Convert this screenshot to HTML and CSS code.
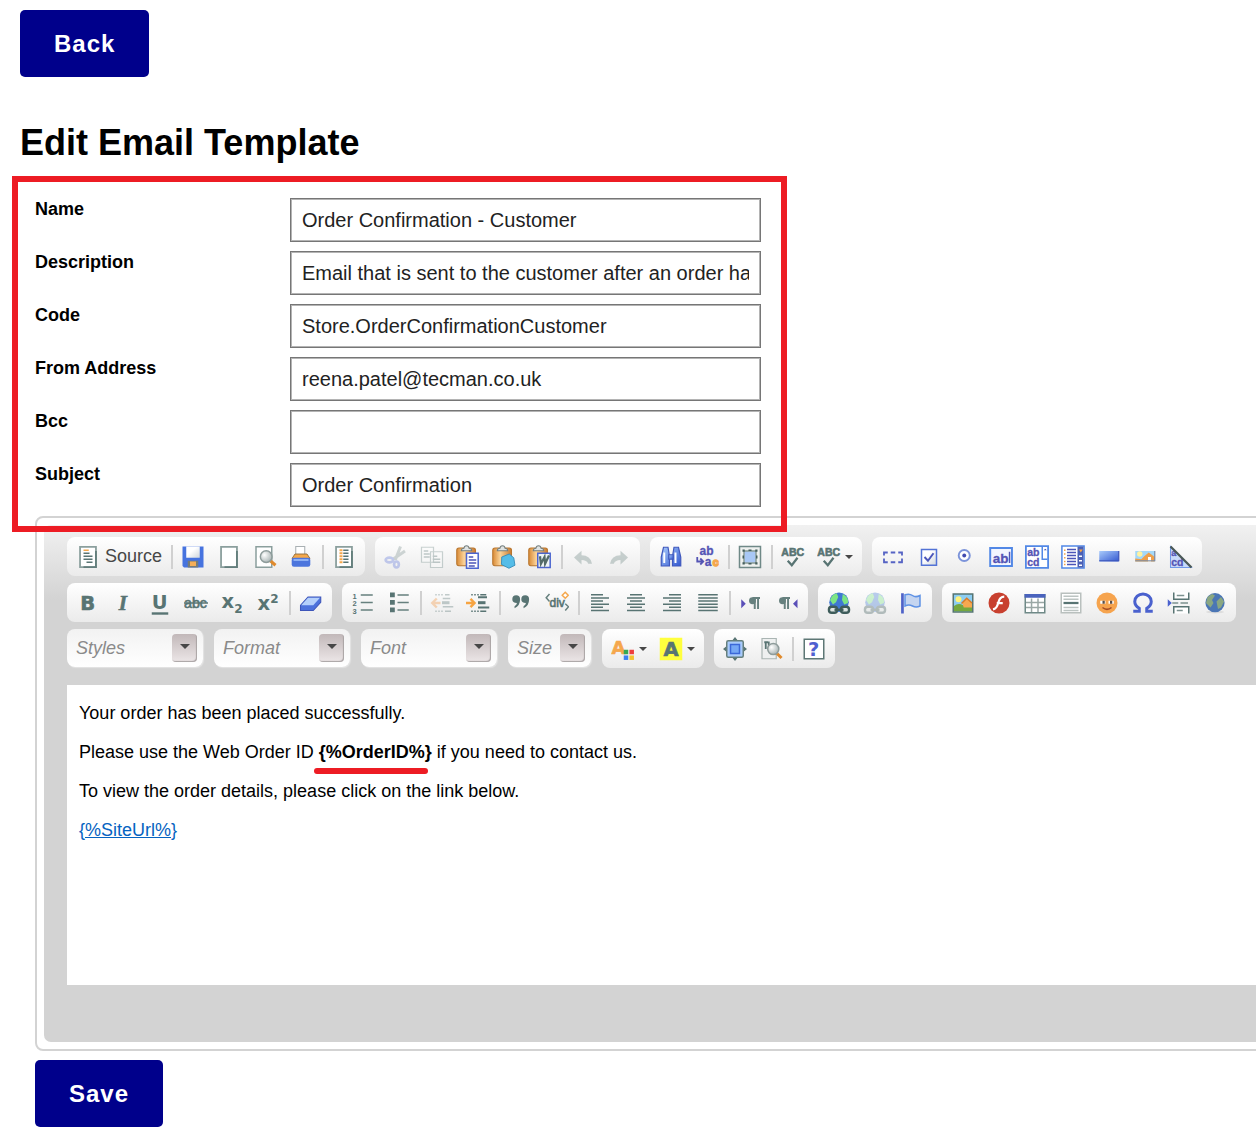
FILE: index.html
```html
<!DOCTYPE html>
<html lang="en">
<head>
<meta charset="utf-8">
<meta name="viewport" content="width=device-width, initial-scale=1">
<title>Edit Email Template</title>
<link rel="stylesheet" href="styles.css">
</head>
<body>
<svg class="defs" aria-hidden="true">
  <defs>
    <linearGradient id="blue" x1="0" y1="0" x2="1" y2="1"><stop offset="0" stop-color="#a9cbfb"/><stop offset="1" stop-color="#3358d0"/></linearGradient>
    <linearGradient id="board" x1="0" y1="0" x2="1" y2="0"><stop offset="0" stop-color="#d98a35"/><stop offset=".4" stop-color="#fbd49a"/><stop offset="1" stop-color="#c9792d"/></linearGradient>
    <linearGradient id="sheet" x1="0" y1="0" x2="1" y2="1"><stop offset=".4" stop-color="#fff"/><stop offset="1" stop-color="#cfd6dc"/></linearGradient>
    <radialGradient id="lens" cx=".35" cy=".35" r=".7"><stop offset="0" stop-color="#fff"/><stop offset="1" stop-color="#a9b4b4"/></radialGradient>
    <symbol id="page" viewBox="0 0 16 16"><path d="M2.700 1.200h10.600v13.600H2.700z" fill="#fff" stroke="#8b9f9d" stroke-width="1.200"/><path d="M13.300 4v10.800H5" fill="none" stroke="#637e7c" stroke-width="1.200"/></symbol>
    <symbol id="clipboard" viewBox="0 0 16 16"><rect x=".5" y="2" width="12.500" height="11.800" rx="1.500" fill="url(#board)" stroke="#b8762f" stroke-width=".7"/><path d="M3.500 3.800c0-1 1-1.500 1.800-1.600C5.500 0 8.500 0 8.700 2.200c.9.1 1.800.6 1.800 1.600z" fill="#dfe3e3" stroke="#747f7f" stroke-width=".7"/></symbol>
    <symbol id="abc-check" viewBox="0 0 16 16"><text x=".2" y="7.400" class="glyph edged" font-size="7">ABC</text><path d="M4.500 10.500l2.700 3L11 8.500" fill="none" stroke="#587473" stroke-width="1.500"/></symbol>
    <symbol id="down" viewBox="0 0 8 4"><path d="M0 0h8L4 4z" fill="#474747"/></symbol>
    <symbol id="scene" viewBox="0 0 16 16"><path d="M1.500 2h13v12h-13z" fill="#8ccdf2" stroke="#567472"/><circle cx="5" cy="5.500" r="2" fill="#fff27b"/><path d="M2 10q3-2.500 6-.5l6 1v3H2z" fill="#75a83e"/><path d="M7.500 8l3-3 3.500 3v3H8.500z" fill="#f6a850"/><path d="M7 8.300l3.500-3.500L14 8" fill="none" stroke="#d87a27"/></symbol>
  </defs>
</svg>
<main class="page">
  <button type="button" class="button">Back</button>
  <h1>Edit Email Template</h1>
  <form class="template-form">
    <div class="fields">
      <label for="name">Name</label><input id="name" type="text" value="Order Confirmation - Customer">
      <label for="description">Description</label><input id="description" type="text" value="Email that is sent to the customer after an order has been placed">
      <label for="code">Code</label><input id="code" type="text" value="Store.OrderConfirmationCustomer">
      <label for="from">From Address</label><input id="from" type="text" value="reena.patel@tecman.co.uk">
      <label for="bcc">Bcc</label><input id="bcc" type="text">
      <label for="subject">Subject</label><input id="subject" type="text" value="Order Confirmation">
    </div>
    <div class="editor">
      <div class="editor-frame">
        <div class="toolbars">
          <div class="toolbar-row">
            <div class="group">
              <button type="button" class="tool source"><svg viewBox="0 0 16 16"><use href="#page"/><path d="M5 3.500h3.500" stroke="#f5a74c"/><path d="M5 5.500h4M5 7.500h6M5 9.500h6M7 11.500h4" stroke="#587473"/></svg>Source</button>
              <span class="sep"></span>
              <button type="button" class="tool" aria-label="Save"><svg viewBox="0 0 16 16"><path d="M1 1h14v14H2l-1-1z" fill="#4673df"/><path d="M3.500 1h9v7.500h-9z" fill="url(#sheet)"/><path d="M4.500 10.500h7V15h-7z" fill="#767c78"/><path d="M6 11h4v3H6z" fill="#f5ae58"/></svg></button>
              <button type="button" class="tool" aria-label="New Page"><svg viewBox="0 0 16 16"><use href="#page"/></svg></button>
              <button type="button" class="tool" aria-label="Preview"><svg viewBox="0 0 16 16"><path d="M2 1.200h10.500v13.600H2z" fill="#fff" stroke="#8b9f9d"/><path d="M11.500 10.500l3.500 3" stroke="#e08a2c" stroke-width="2"/><circle cx="8.800" cy="7.800" r="3.900" fill="url(#lens)" stroke="#8e9c9b"/></svg></button>
              <button type="button" class="tool" aria-label="Print"><svg viewBox="0 0 16 16"><path d="M4.500 1h6v6h-6z" fill="#fff" stroke="#a9b0b3" stroke-width=".7"/><path d="M2 9l2-3h8l2 3z" fill="#f4a84b" stroke="#8e6a38" stroke-width=".6"/><rect x="1.800" y="8.500" width="12.400" height="6" rx="1.500" fill="#4c75dd"/><path d="M3 10h10" stroke="#a3c5fb"/></svg></button>
              <span class="sep"></span>
              <button type="button" class="tool" aria-label="Templates"><svg viewBox="0 0 16 16"><use href="#page"/><path d="M5 3.500h2M5 5.500h2M5 7.500h2M5 9.500h2M5 11.500h2" stroke="#f5a74c" stroke-width="1.400"/><path d="M7.500 3.500H11M7.500 5.500H11M7.500 7.500H11M7.500 9.500H11M7.500 11.500H11" stroke="#587473"/></svg></button>
            </div>
            <div class="group">
              <button type="button" class="tool dim" aria-label="Cut"><svg viewBox="0 0 16 16"><path d="M11 1L7.500 10M14 4L6 9.500" stroke="#7f9291" stroke-width="2"/><g fill="none" stroke="#6077db" stroke-width="1.800"><ellipse cx="3.600" cy="10" rx="2.500" ry="1.600"/><ellipse cx="8.300" cy="13" rx="1.600" ry="2"/></g></svg></button>
              <button type="button" class="tool dim" aria-label="Copy"><svg viewBox="0 0 16 16"><g fill="#fff" stroke="#6f8987" stroke-width=".8"><path d="M1 1.500h8v10H1zM7 4.500h8v10.500H7z"/></g><path d="M2.500 4h3M2.500 6h4M2.500 8h4M8.500 7.500h3M8.500 9.500h5M8.500 11.500h5" stroke="#587473" stroke-width=".9"/></svg></button>
              <button type="button" class="tool" aria-label="Paste"><svg viewBox="0 0 16 16"><use href="#clipboard"/><path d="M7 5.500h7.800v10H7z" fill="#fff" stroke="#4b65cf"/><path d="M8.500 8h3M8.500 10h5M8.500 12h5M8.500 14h4" stroke="#4b55b8"/></svg></button>
              <button type="button" class="tool" aria-label="Paste as plain text"><svg viewBox="0 0 16 16"><use href="#clipboard"/><path d="M6.500 8l5-2 3 2.500.8 5-4 2-5-2.500z" fill="#55bde8" stroke="#368cb8" stroke-width=".6"/></svg></button>
              <button type="button" class="tool" aria-label="Paste from Word"><svg viewBox="0 0 16 16"><use href="#clipboard"/><path d="M6.500 5.500h8.300v9.500H6.500z" fill="#eef4f5" stroke="#4b65cf"/><path d="M8 7.500l.6 5L11 8l.4 4.500L14 7" fill="none" stroke="#536b69" stroke-width="1.500"/></svg></button>
              <span class="sep"></span>
              <button type="button" class="tool dim" aria-label="Undo"><svg viewBox="0 0 16 16"><path d="M2 8.300l5-4.500v3q6 0 7 5.700h-2.500q-1-2.500-4.500-2.500v3z" fill="#6e8784"/></svg></button>
              <button type="button" class="tool dim" aria-label="Redo"><svg viewBox="0 0 16 16"><path d="M14 8.300L9 3.800v3q-6 0-7 5.700h2.500Q5.500 10 9 10v3z" fill="#6e8784"/></svg></button>
            </div>
            <div class="group">
              <button type="button" class="tool" aria-label="Find"><svg viewBox="0 0 16 16"><g fill="url(#blue)" stroke="#4058bd" stroke-width=".8"><path d="M3 1.500h3l1 6v6.500H1.500V8zM10 1.500h3L14.500 8v6H9V7.500z"/><path d="M6.500 6.500h3v3h-3z"/></g><path d="M3.500 5v7M11 5v7" stroke="#fff" stroke-width="1.300"/></svg></button>
              <button type="button" class="tool" aria-label="Replace"><svg viewBox="0 0 16 16"><text x="3" y="6.800" class="glyph violet edged" font-size="8">ab</text><text x="6.500" y="14.200" class="glyph violet edged" font-size="8">a</text><text x="11.800" y="14.200" class="glyph orange" font-size="7">c</text><path d="M1.500 8v3H5M3.500 9l2 2-2 2" fill="none" stroke="#5454b4" stroke-width="1.200"/></svg></button>
              <span class="sep"></span>
              <button type="button" class="tool" aria-label="Select All"><svg viewBox="0 0 16 16"><path d="M1 1h14v14H1z" fill="#eef1ef" stroke="#6f8987"/><path d="M4 4h8v8H4z" fill="#a9c8f6" stroke="#8a9c98"/><path d="M3 3h1.500v1.500H3zM11.500 3H13v1.500h-1.500zM3 11.500h1.500V13H3zM11.500 11.500H13V13h-1.500zM7 3h2v1H7zM7 12h2v1H7zM3 7h1v2H3zM12 7h1v2h-1z" fill="#455f5d"/></svg></button>
              <span class="sep"></span>
              <button type="button" class="tool" aria-label="Check Spelling"><svg viewBox="0 0 16 16"><use href="#abc-check"/></svg></button>
              <button type="button" class="tool menu" aria-label="Spell Check As You Type"><svg viewBox="0 0 16 16"><use href="#abc-check"/></svg><svg class="down"><use href="#down"/></svg></button>
            </div>
            <div class="group">
              <button type="button" class="tool" aria-label="Form"><svg viewBox="0 0 16 16"><path d="M2 7V5h2.500M6.500 5h3M11.500 5H14v2M14 9v2.500h-2.500M9.500 11.500h-3M4.500 11.500H2V9" fill="none" stroke="#5563c4" stroke-width="1.200"/></svg></button>
              <button type="button" class="tool" aria-label="Checkbox"><svg viewBox="0 0 16 16"><path d="M3 3h10v10.500H3z" fill="url(#sheet)" stroke="#5373d6"/><path d="M5 8l2.300 2.500L11 5.500" fill="none" stroke="#4c56ba" stroke-width="1.300"/></svg></button>
              <button type="button" class="tool" aria-label="Radio Button"><svg viewBox="0 0 16 16"><circle cx="7.500" cy="7" r="3.700" fill="#fff" stroke="#7c94da" stroke-width="1.300"/><circle cx="7.500" cy="7" r="1.300" fill="#414bb0"/></svg></button>
              <button type="button" class="tool" aria-label="Text Field"><svg viewBox="0 0 16 16"><path d="M.8 2h14.500v12H.8z" fill="#f3f6ff" stroke="#5288e6" stroke-width="1.300"/><text x="2.500" y="11.800" class="glyph violet" font-size="9">ab</text><path d="M13.700 4.500v7.500" stroke="#5454b4"/></svg></button>
              <button type="button" class="tool" aria-label="Textarea"><svg viewBox="0 0 16 16"><path d="M.6.700h14.800v14.600H.6z" fill="#fff" stroke="#5288e6" stroke-width="1.200"/><path d="M11.500 1v8.500H15" fill="none" stroke="#5288e6"/><path d="M12.500 3.500h2l-1-1z" fill="#404bb0"/><text x="1.500" y="7" class="glyph violet edged" font-size="7">ab</text><text x="1.500" y="14" class="glyph violet edged" font-size="7">cd</text></svg></button>
              <button type="button" class="tool" aria-label="Selection Field"><svg viewBox="0 0 16 16"><path d="M.6.700h14.800v14.600H.6z" fill="#fff" stroke="#5288e6"/><path d="M2 3.500h1M2 6h1M2 8.500h1M2 11h1M2 13h1" stroke="#f2a34a"/><path d="M4 3h6M4 5h6M4 7h6M4 9h6M4 11h6M4 13h6" stroke="#4b55b8"/><path d="M11 1h4v14h-4z" fill="#4b60b5"/><path d="M12 3h2.500L13.200 5z" fill="#f8a846"/><path d="M12 7h2v1h-2zM12 10h2v1h-2zM12 13h2v1h-2z" fill="#fff"/></svg></button>
              <button type="button" class="tool" aria-label="Button"><svg viewBox="0 0 16 16"><path d="M1.500 4h13v7h-13z" fill="url(#blue)"/><path d="M1.500 10.500h13V4" fill="none" stroke="#3d55b9" stroke-width=".8"/></svg></button>
              <button type="button" class="tool" aria-label="Image Button"><svg viewBox="0 0 16 16"><path d="M1.500 4h13v7h-13z" fill="#a4d8f8"/><circle cx="4.500" cy="6" r="1.800" fill="#fff3a0"/><path d="M1.500 9l4 .5 2-2 3-2.500 4 3v3h-13z" fill="#efa04a"/><path d="M10 8h2v3h-2z" fill="#fff"/><path d="M1.500 10.500h13V4" fill="none" stroke="#7a8ca7" stroke-width=".8"/></svg></button>
              <button type="button" class="tool" aria-label="Hidden Field"><svg viewBox="0 0 16 16"><path d="M1 1v14h14z" fill="#c9dafa" stroke="#7098e8" stroke-width=".7"/><text x="1.500" y="7.500" class="glyph violet edged" font-size="6">a</text><text x="1.500" y="14" class="glyph violet edged" font-size="7">cd</text><path d="M1 1l14 14" stroke="#4b5957" stroke-width="1.500"/></svg></button>
            </div>
          </div>
          <div class="toolbar-row">
            <div class="group">
              <button type="button" class="tool" aria-label="Bold"><svg viewBox="0 0 16 16"><text x="2.800" y="12.700" class="glyph heavy edged" font-size="13">B</text></svg></button>
              <button type="button" class="tool" aria-label="Italic"><svg viewBox="0 0 16 16"><text x="4.500" y="12.500" class="glyph serif edged" font-size="14">I</text></svg></button>
              <button type="button" class="tool" aria-label="Underline"><svg viewBox="0 0 16 16"><text x="2.500" y="12.200" class="glyph heavy" font-size="13">U</text><path d="M2.500 15h11" stroke="#587473" stroke-width="1.600"/></svg></button>
              <button type="button" class="tool" aria-label="Strike Through"><svg viewBox="0 0 16 16"><text x="0" y="11" class="glyph plain edged" font-size="9.500">abc</text><path d="M0 8h16" stroke="#587473"/></svg></button>
              <button type="button" class="tool" aria-label="Subscript"><svg viewBox="0 0 16 16"><text x="1" y="11.500" class="glyph heavy" font-size="13">x</text><text x="9.500" y="14.500" class="glyph heavy" font-size="8">2</text></svg></button>
              <button type="button" class="tool" aria-label="Superscript"><svg viewBox="0 0 16 16"><text x="1" y="12.500" class="glyph heavy" font-size="13">x</text><text x="9.500" y="7.800" class="glyph heavy" font-size="8">2</text></svg></button>
              <span class="sep"></span>
              <button type="button" class="tool" aria-label="Remove Format"><svg viewBox="0 0 16 16"><path d="M1 9.500L6 4h8.500v3.500L9.500 13H1z" fill="#4d72dc" stroke="#3d55b9" stroke-width=".7"/><path d="M1.500 9.500L6 4.500h8l-4.500 5z" fill="#b5d0fb"/></svg></button>
            </div>
            <div class="group">
              <button type="button" class="tool" aria-label="Numbered List"><svg viewBox="0 0 16 16"><text x="1" y="5" class="glyph" font-size="5">1</text><text x="1" y="10" class="glyph" font-size="5">2</text><text x="1" y="15" class="glyph" font-size="5">3</text><path d="M6.500 2.700h8M6.500 7.700h8M6.500 12.700h8" stroke="#66807e"/></svg></button>
              <button type="button" class="tool" aria-label="Bulleted List"><svg viewBox="0 0 16 16"><path d="M2 1h3.200v3.200H2zM2 6h3.200v3.200H2zM2 11h3.200v3.200H2z" fill="#587473"/><path d="M7 2.700h7.500M7 7.700h7.500M7 12.700h7.500" stroke="#66807e"/></svg></button>
              <span class="sep"></span>
              <button type="button" class="tool dim" aria-label="Decrease Indent"><svg viewBox="0 0 16 16"><path d="M3.500 2.500h5M3.500 13.500h5" stroke="#587473" stroke-dasharray="1 1"/><path d="M8.500 5h5M8.500 10.500h7M10 2.500h3M10 13.500h4" stroke="#587473"/><path d="M8 6.800h5v2H8z" fill="#587473"/><path d="M7 8H2M4.500 5L1.500 8l3 3" fill="none" stroke="#f2913a" stroke-width="1.600"/></svg></button>
              <button type="button" class="tool" aria-label="Increase Indent"><svg viewBox="0 0 16 16"><path d="M3.500 2.500h5M3.500 13.500h5" stroke="#587473" stroke-dasharray="1 1"/><path d="M9.500 2.500h4M9.500 13.500h4" stroke="#587473"/><path d="M8 4.200h6M8 11h7.500" stroke="#587473" stroke-width="1.400"/><path d="M8 6.800h5v2H8z" fill="#587473"/><path d="M0 8h5M3 5.300L5.700 8 3 10.700" fill="none" stroke="#f6a442" stroke-width="1.600"/></svg></button>
              <span class="sep"></span>
              <button type="button" class="tool" aria-label="Block Quote"><svg viewBox="0 0 16 16"><path id="q" d="M2.200 5.500a2.600 2.600 0 1 1 5.200 0q0 4.500-3.700 6v-1.300q1.500-.8 1.600-2.200-3.100 0-3.100-2.500z" fill="#587473"/><use href="#q" x="6"/></svg></button>
              <button type="button" class="tool" aria-label="Create Div Container"><svg viewBox="0 0 16 16"><path d="M3 2L.8 4.500 3 7M13.500 8.500l2.200 2-2.200 2.500" fill="none" stroke="#66807e"/><text x="3" y="10.500" class="glyph plain edged" font-size="8">div</text><path d="M13.500.8l2 2-2 2-2-2z" fill="#fff" stroke="#f5a74c"/></svg></button>
              <span class="sep"></span>
              <button type="button" class="tool" aria-label="Align Left"><svg viewBox="0 0 16 16"><path d="M2 2.500h8M2 4.600h12M2 6.700h8M2 8.800h12M2 10.900h8M2 13h12" stroke="#587473"/></svg></button>
              <button type="button" class="tool" aria-label="Center"><svg viewBox="0 0 16 16"><path d="M4 2.500h8M2 4.600h12M4 6.700h8M2 8.800h12M4 10.900h8M2 13h12" stroke="#587473"/></svg></button>
              <button type="button" class="tool" aria-label="Align Right"><svg viewBox="0 0 16 16"><path d="M6 2.500h8M2 4.600h12M6 6.700h8M2 8.800h12M6 10.900h8M2 13h12" stroke="#587473"/></svg></button>
              <button type="button" class="tool" aria-label="Justify"><svg viewBox="0 0 16 16"><path d="M1.500 2.500h13M1.500 4.600h13M1.500 6.700h13M1.500 8.800h13M1.500 10.900h13M1.500 13h13" stroke="#587473"/></svg></button>
              <span class="sep"></span>
              <button type="button" class="tool" aria-label="Text direction from left to right"><svg viewBox="0 0 16 16"><path d="M1.500 5.500l3 3-3 3z" fill="#5a4fb8"/><path d="M14 4.700H9M10.500 4.500V12M12.700 4.500V12" stroke="#66807e" stroke-width="1.300"/><circle cx="9" cy="6.500" r="2.300" fill="#66807e"/></svg></button>
              <button type="button" class="tool" aria-label="Text direction from right to left"><svg viewBox="0 0 16 16"><path d="M15 5.500l-3 3 3 3z" fill="#5a4fb8"/><path d="M10 4.700H5M6.500 4.500V12M8.700 4.500V12" stroke="#66807e" stroke-width="1.300"/><circle cx="5" cy="6.500" r="2.300" fill="#66807e"/></svg></button>
            </div>
            <div class="group">
              <button type="button" class="tool" aria-label="Link"><svg viewBox="0 0 16 16"><g id="chain"><circle cx="8" cy="7.500" r="6.500" fill="#3f78d2"/><path d="M2 6q1.500-4 4.500-4.500L7.500 4 6 7.500 4 9zM10.500 2q4 2 3.500 6l-2.500 1L10 6z" fill="#7ce584"/><g fill="#dce4e2" stroke="#3e5c5a" stroke-width="1.600"><rect x="1.300" y="10.500" width="5.400" height="4" rx="1.800"/><rect x="9.300" y="10.500" width="5.400" height="4" rx="1.800"/></g><path d="M5 12.500h6" stroke="#3e5c5a" stroke-width="1.600"/></g></svg></button>
              <button type="button" class="tool dim" aria-label="Unlink"><svg viewBox="0 0 16 16"><use href="#chain"/></svg></button>
              <button type="button" class="tool" aria-label="Anchor"><svg viewBox="0 0 16 16"><path d="M4 2.500q3-1 5 .5t5 0v7q-2.500 1.300-5 0t-5 0z" fill="#c5d5f0" stroke="#5f92e5"/><path d="M2.300 1.500v13.500" stroke="#4e62c8" stroke-width="1.800"/></svg></button>
            </div>
            <div class="group">
              <button type="button" class="tool" aria-label="Image"><svg viewBox="0 0 16 16"><use href="#scene"/></svg></button>
              <button type="button" class="tool" aria-label="Flash"><svg viewBox="0 0 16 16"><circle cx="8" cy="8" r="7" fill="#c8402f"/><path d="M11.500 3.800q-3 0-4 4t-3.500 4.500M6.500 8h4" fill="none" stroke="#fff" stroke-width="1.500"/></svg></button>
              <button type="button" class="tool" aria-label="Table"><svg viewBox="0 0 16 16"><path d="M1.500 2.500h13v12h-13z" fill="#fff" stroke="#6f8987"/><path d="M1 2h14v2.500H1z" fill="#4a63bd"/><path d="M2 7.700h12M2 11h12M5.700 5v9M10 5v9" stroke="#9aa7a5"/></svg></button>
              <button type="button" class="tool" aria-label="Horizontal Line"><svg viewBox="0 0 16 16"><path d="M1.500 1.500h13v13h-13z" fill="#fff" stroke="#b9c0be"/><path d="M3 3.500h10M3 5.500h10M3 11h10M3 13h10" stroke="#bcc4c2"/><path d="M3 8h10" stroke="#587473" stroke-width="1.500"/></svg></button>
              <button type="button" class="tool" aria-label="Smiley"><svg viewBox="0 0 16 16"><circle cx="8" cy="8" r="7" fill="#f6a44e"/><path d="M3.500 6.500h3.500v2H3.500zM9 6.500h3.500v2H9z" fill="#fff"/><path d="M5 6.500h1.500v2H5zM10 6.500h1.500v2H10z" fill="#594e48"/><path d="M5 11q3 2.500 6 0" fill="none" stroke="#a44c25"/></svg></button>
              <button type="button" class="tool" aria-label="Insert Special Character"><svg viewBox="0 0 16 16"><path d="M1.500 13.500h4V11.500Q2.500 9.800 2.500 7a5.500 5 0 0 1 11 0q0 2.800-3 4.500v2h4" fill="none" stroke="#4a61ce" stroke-width="2"/></svg></button>
              <button type="button" class="tool" aria-label="Insert Page Break for Printing"><svg viewBox="0 0 16 16"><path d="M.5 5.500L3.200 8 .5 10.500z" fill="#4a61ce"/><path d="M4.500 1v4.500h10V1M4.500 15v-4.500h10V15" fill="#fff" stroke="#587473"/><path d="M6.500 3h5M6.500 13h4M3.500 8h4M9 8h5" stroke="#7c918f"/></svg></button>
              <button type="button" class="tool" aria-label="IFrame"><svg viewBox="0 0 16 16"><ellipse cx="8" cy="14" rx="6" ry="1" fill="#ddd"/><circle cx="8" cy="7.800" r="6.400" fill="#4b76b5"/><path d="M3 4l3-2 2 1-2 3 1 2-2 3-3-3zM9 7l3-3 2 3-2 4-2 1z" fill="#8aa782"/></svg></button>
            </div>
          </div>
          <div class="toolbar-row combos">
            <label class="combo"><select aria-label="Styles"><option>Styles</option></select><span class="arrow"><svg class="down"><use href="#down"/></svg></span></label>
            <label class="combo"><select aria-label="Format"><option>Format</option></select><span class="arrow"><svg class="down"><use href="#down"/></svg></span></label>
            <label class="combo"><select aria-label="Font"><option>Font</option></select><span class="arrow"><svg class="down"><use href="#down"/></svg></span></label>
            <label class="combo small"><select aria-label="Size"><option>Size</option></select><span class="arrow"><svg class="down"><use href="#down"/></svg></span></label>
            <div class="toolbar-row">
              <div class="group">
                <button type="button" class="tool menu" aria-label="Text Color"><svg viewBox="0 0 16 16"><text x=".3" y="11.500" class="glyph heavy orange edged" font-size="12">A</text><path d="M8.500 8.500h3v3h-3z" fill="#36a852"/><path d="M12.300 8.500h3v3h-3z" fill="#ee3d3d"/><path d="M8.500 12.300h3v3h-3z" fill="#3c80f0"/><path d="M12.300 12.300h3v3h-3z" fill="#f3c22f"/></svg><svg class="down"><use href="#down"/></svg></button>
                <button type="button" class="tool menu" aria-label="Background Color"><svg viewBox="0 0 16 16"><path d="M.5.500h15v15H.5z" fill="#ffff3d"/><text x="3" y="12.600" class="glyph heavy edged" font-size="13">A</text></svg><svg class="down"><use href="#down"/></svg></button>
              </div>
              <div class="group">
                <button type="button" class="tool" aria-label="Maximize"><svg viewBox="0 0 16 16"><path d="M8 0l2 2.500H6zM8 16l2-2.500H6zM0 8l2.500-2v4zM16 8l-2.500-2v4z" fill="#587473"/><rect x="2.500" y="2.500" width="11" height="11" rx="1" fill="#a9cbfb" stroke="#66807e"/><path d="M5 5h6v6H5z" fill="#75a8f5" stroke="#3b68d8"/></svg></button>
                <button type="button" class="tool" aria-label="Show Blocks"><svg viewBox="0 0 16 16"><path d="M2 1h9.500v13.500H2z" fill="#eef0f0" stroke="#aab5b3" stroke-width=".8"/><path d="M6 3.500H3.500M4.500 3v5M6.500 3v4" stroke="#587473" stroke-width="1.200"/><path d="M12 11l3 3" stroke="#e08a2c" stroke-width="2"/><circle cx="9.500" cy="8" r="3.700" fill="url(#lens)" stroke="#8e9c9b"/></svg></button>
                <span class="sep"></span>
                <button type="button" class="tool" aria-label="About"><svg viewBox="0 0 16 16"><path d="M1.500 1.500h13v13h-13z" fill="#fff" stroke="#5d7775"/><text x="4" y="12.800" class="glyph heavy blue" font-size="13">?</text></svg></button>
              </div>
            </div>
          </div>
        </div>
        <div class="content" contenteditable="true" role="textbox" aria-label="Email body" spellcheck="false">
          <p>Your order has been placed successfully.</p>
          <p>Please use the Web Order ID <strong class="marked">{%OrderID%}</strong> if you need to contact us.</p>
          <p>To view the order details, please click on the link below.</p>
          <p><a href="#site">{%SiteUrl%}</a></p>
        </div>
      </div>
    </div>
    <button type="submit" class="button">Save</button>
  </form>
</main>
</body>
</html>
```

FILE: styles.css
```css
* {
  box-sizing: border-box;
}

body {
  margin: 0;
  background: #fff;
  color: #000;
  font-family: "Liberation Sans", Arial, sans-serif;
  font-size: 18px;
  line-height: 21px;
}

button,
input,
select {
  margin: 0;
  font: inherit;
}

.defs {
  position: absolute;
  width: 0;
  height: 0;
}

.page {
  overflow: hidden;
  padding: 10px 0 16px 20px;
}

.button {
  display: block;
  padding: 20px 34px;
  border: 0;
  border-radius: 5px;
  background: #00008b;
  color: #fff;
  font-size: 24px;
  font-weight: bold;
  line-height: 27px;
  letter-spacing: 1px;
}

h1 {
  margin: 45px 0 34px;
  font-size: 36px;
  line-height: 42px;
}

.template-form {
  padding-left: 15px;
}

/* Form fields, outlined in red */
.fields {
  position: relative;
  z-index: 1;
  display: grid;
  grid-template-columns: 255px 471px;
  row-gap: 9px;
  width: max-content;
}

.fields::after {
  content: "";
  position: absolute;
  inset: -22px -26px -25px -23px;
  border: 6px solid #ed1c24;
  pointer-events: none;
}

.fields label {
  font-weight: bold;
  line-height: 23px;
}

.fields input {
  height: 44px;
  padding: 0 11px;
  border: 1px solid #767676;
  border-radius: 0;
  box-shadow: inset 0 0 0 1px #b4b4b4;
  background: #fff;
  color: #222;
  font-size: 20px;
}

/* Rich text editor; runs past the right edge of the window */
.editor {
  margin: 9px -40px 9px 0;
  padding: 7px;
  border: 2px solid #d3d3d3;
  border-radius: 8px;
}

.editor-frame {
  padding: 12px 23px 57px;
  border-radius: 7px;
  background: #d3d3d3 linear-gradient(#f1f1f1, #d3d3d3) no-repeat 0 0 / 100% 75px;
}

.toolbars {
  display: flex;
  flex-direction: column;
  gap: 7px;
  padding-bottom: 17px;
}

.toolbar-row {
  display: flex;
  gap: 10px;
}

.combos {
  gap: 11px;
}

.group {
  display: flex;
  flex: none;
  align-items: center;
  height: 39px;
  padding: 0 3px;
  border-radius: 8px;
  background: linear-gradient(#fff, #ebebeb);
}

.sep {
  width: 2px;
  height: 24px;
  margin: 0 2px 0 3px;
  background: #d0d0d0;
}

.tool {
  display: flex;
  align-items: center;
  gap: 5px;
  height: 36px;
  padding: 0 6px;
  border: 0;
  background: none;
  color: #474747;
}

.tool svg {
  flex: none;
  width: 24px;
  height: 24px;
}

.source {
  width: 98px;
}

.menu {
  gap: 4px;
  width: 48px;
}

.tool .down,
.arrow .down {
  width: 8px;
  height: 4px;
}

.dim svg {
  opacity: 0.35;
}

.glyph {
  fill: #587473;
  font-family: "Liberation Sans", Arial, sans-serif;
  font-weight: bold;
}

.edged {
  stroke: #587473;
  stroke-width: 0.4px;
}

.heavy {
  font-family: "DejaVu Sans", sans-serif;
}

.serif {
  font-family: "Liberation Serif", serif;
  font-style: italic;
}

.plain {
  font-weight: normal;
}

.violet {
  fill: #5555b5;
  stroke: #5555b5;
  stroke-width: 0.2px;
}

.blue {
  fill: #5060d0;
}

.orange {
  fill: #f5a74c;
  stroke: #f5a74c;
}

.combo {
  display: grid;
  grid-template-columns: 136px;
  align-items: center;
  height: 38px;
  border-radius: 8px;
  background: linear-gradient(#f2f2f2, #fff);
  box-shadow: 1px 1px 1px #e4e4e4;
}

.small {
  grid-template-columns: 83px;
}

.combo select,
.arrow {
  grid-area: 1 / 1;
}

.combo select {
  appearance: none;
  width: 100%;
  height: 38px;
  padding: 0 34px 0 9px;
  border: 0;
  background: none;
  color: #8a8a8a;
  font-style: italic;
}

.small select {
  padding-right: 24px;
}

.arrow {
  display: grid;
  place-items: center;
  justify-self: end;
  width: 25px;
  height: 28px;
  margin-right: 6px;
  padding-bottom: 3px;
  border-radius: 4px;
  background: linear-gradient(#c2b8b9, #ece6e7);
  box-shadow: inset -1px -1px 1px #a9a3a4;
  pointer-events: none;
}

.arrow .down {
  width: 10px;
  height: 5px;
}

.content {
  min-height: 300px;
  padding: 18px 12px;
  background: #fff;
}

.content p {
  margin: 0 0 18px;
}

.content a {
  color: #0563c1;
}

.marked {
  position: relative;
}

.marked::after {
  content: "";
  position: absolute;
  right: 4px;
  bottom: -12px;
  left: -5px;
  height: 6px;
  border-radius: 3px;
  background: #ed1c24;
}
```
